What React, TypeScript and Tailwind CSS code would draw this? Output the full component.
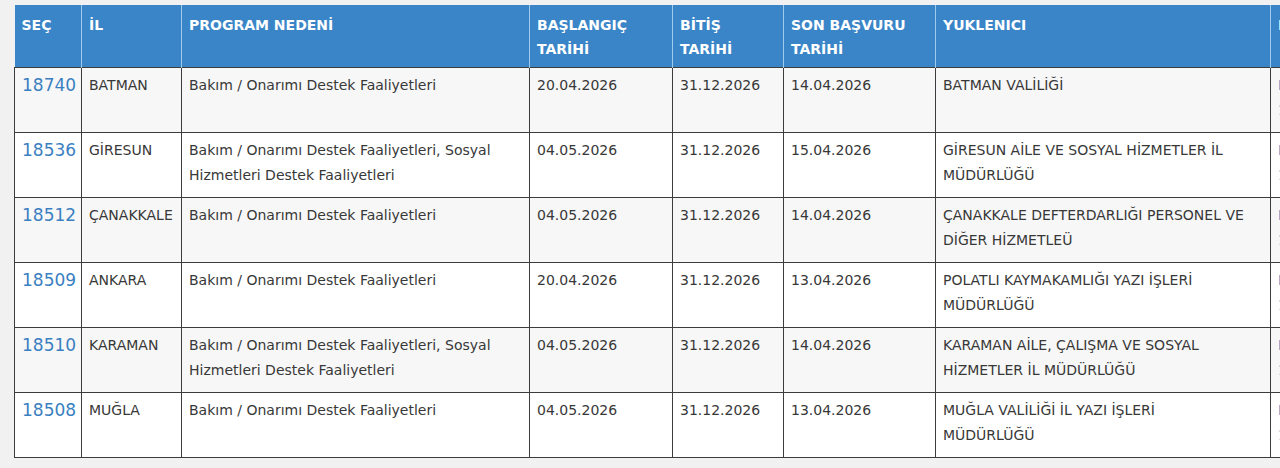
import React from 'react';

type Row = {
  id: string;
  il: string;
  neden: string;
  baslangic: string;
  bitis: string;
  sonBasvuru: string;
  yuklenici: string;
};

const ROWS: Row[] = [
  { id: '18740', il: 'BATMAN', neden: 'Bakım / Onarımı Destek Faaliyetleri', baslangic: '20.04.2026', bitis: '31.12.2026', sonBasvuru: '14.04.2026', yuklenici: 'BATMAN VALİLİĞİ' },
  { id: '18536', il: 'GİRESUN', neden: 'Bakım / Onarımı Destek Faaliyetleri, Sosyal Hizmetleri Destek Faaliyetleri', baslangic: '04.05.2026', bitis: '31.12.2026', sonBasvuru: '15.04.2026', yuklenici: 'GİRESUN AİLE VE SOSYAL HİZMETLER İL MÜDÜRLÜĞÜ' },
  { id: '18512', il: 'ÇANAKKALE', neden: 'Bakım / Onarımı Destek Faaliyetleri', baslangic: '04.05.2026', bitis: '31.12.2026', sonBasvuru: '14.04.2026', yuklenici: 'ÇANAKKALE DEFTERDARLIĞI PERSONEL VE DİĞER HİZMETLEÜ' },
  { id: '18509', il: 'ANKARA', neden: 'Bakım / Onarımı Destek Faaliyetleri', baslangic: '20.04.2026', bitis: '31.12.2026', sonBasvuru: '13.04.2026', yuklenici: 'POLATLI KAYMAKAMLIĞI YAZI İŞLERİ MÜDÜRLÜĞÜ' },
  { id: '18510', il: 'KARAMAN', neden: 'Bakım / Onarımı Destek Faaliyetleri, Sosyal Hizmetleri Destek Faaliyetleri', baslangic: '04.05.2026', bitis: '31.12.2026', sonBasvuru: '14.04.2026', yuklenici: 'KARAMAN AİLE, ÇALIŞMA VE SOSYAL HİZMETLER İL MÜDÜRLÜĞÜ' },
  { id: '18508', il: 'MUĞLA', neden: 'Bakım / Onarımı Destek Faaliyetleri', baslangic: '04.05.2026', bitis: '31.12.2026', sonBasvuru: '13.04.2026', yuklenici: 'MUĞLA VALİLİĞİ İL YAZI İŞLERİ MÜDÜRLÜĞÜ' },
];

const HEADERS = ['SEÇ', 'İL', 'PROGRAM NEDENİ', 'BAŞLANGIÇ TARİHİ', 'BİTİŞ TARİHİ', 'SON BAŞVURU TARİHİ', 'YUKLENICI', 'DETAY'];

const Th: React.FC<{ children: React.ReactNode }> = ({ children }) => (
  <th className="border-r border-[#9fcbee] px-[7px] pt-[8px] text-left align-top text-[14px] font-bold leading-[24px] text-white">
    {children}
  </th>
);

const Td: React.FC<{ children: React.ReactNode; link?: boolean; big?: boolean; wide?: boolean }> = ({ children, link, big, wide }) => (
  <td
    className={`border border-[#3c3c3c] pl-[7px] pt-[5px] align-top leading-[25px] ${wide ? 'pr-[24px]' : 'pr-[7px]'} ${link ? 'text-[#3a7fc1]' : 'text-[#383838]'} ${big ? 'text-[17px]' : 'text-[14px]'}`}
  >
    {children}
  </td>
);

export default function App() {
  return (
    <div className="h-[468px] w-[1280px] overflow-hidden bg-[#f1f1f1] pl-[14px] pt-[5px]" style={{ fontFamily: '"DejaVu Sans", Verdana, sans-serif' }}>
      <table className="w-[1400px] table-fixed border-collapse">
        <colgroup>
          <col className="w-[67px]" />
          <col className="w-[100px]" />
          <col className="w-[348px]" />
          <col className="w-[143px]" />
          <col className="w-[111px]" />
          <col className="w-[152px]" />
          <col className="w-[335px]" />
          <col className="w-[144px]" />
        </colgroup>
        <thead>
          <tr className="h-[62px] bg-[#3a85c7]">
            {HEADERS.map(h => <Th key={h}>{h}</Th>)}
          </tr>
        </thead>
        <tbody>
          {ROWS.map((r, i) => (
            <tr key={r.id} className={`h-[65px] ${i % 2 === 0 ? 'bg-[#f7f7f7]' : 'bg-white'}`}>
              <Td link big>{r.id}</Td>
              <Td>{r.il}</Td>
              <Td>{r.neden}</Td>
              <Td>{r.baslangic}</Td>
              <Td>{r.bitis}</Td>
              <Td>{r.sonBasvuru}</Td>
              <Td wide>{r.yuklenici}</Td>
              <Td link>Başvur<br />10 Gün</Td>
            </tr>
          ))}
        </tbody>
      </table>
    </div>
  );
}
